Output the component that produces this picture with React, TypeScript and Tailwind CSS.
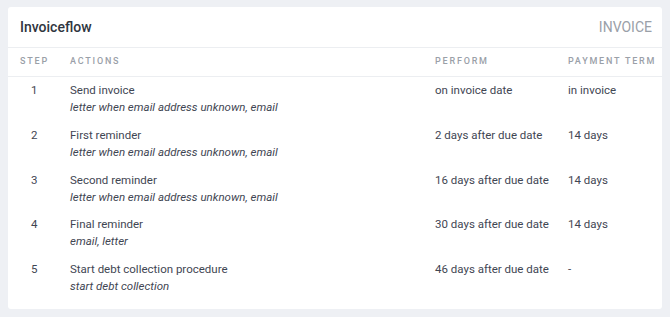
const steps = [
  { step: 1, action: 'Send invoice', channel: 'letter when email address unknown, email', perform: 'on invoice date', term: 'in invoice' },
  { step: 2, action: 'First reminder', channel: 'letter when email address unknown, email', perform: '2 days after due date', term: '14 days' },
  { step: 3, action: 'Second reminder', channel: 'letter when email address unknown, email', perform: '16 days after due date', term: '14 days' },
  { step: 4, action: 'Final reminder', channel: 'email, letter', perform: '30 days after due date', term: '14 days' },
  { step: 5, action: 'Start debt collection procedure', channel: 'start debt collection', perform: '46 days after due date', term: '-' },
];

const cols = 'grid grid-cols-[50px_365px_133px_1fr]';

export default function App() {
  return (
    <div className="min-h-[317px] bg-[#eef0f4] px-[8px] pt-[7px] pb-[7px] font-['Roboto',sans-serif] text-[#3f4653]">
      <div className="bg-white rounded-[3px] pb-[8px]">
        {/* Header */}
        <div className="flex items-center justify-between h-[41px] pl-[12px] pr-[10px] border-b border-[#eceef1]">
          <h1 className="text-[14px] font-medium text-[#2f3540]">Invoiceflow</h1>
          <span className="text-[14px] text-[#9aa0a8]">INVOICE</span>
        </div>

        {/* Column headers */}
        <div className={`${cols} h-[29px] items-center px-[12px] border-b border-[#eceef1] text-[9px] font-medium tracking-[1.8px] text-[#9aa0a8] whitespace-nowrap`}>
          <span>STEP</span>
          <span>ACTIONS</span>
          <span>PERFORM</span>
          <span>PAYMENT TERM</span>
        </div>

        {/* Rows */}
        {steps.map(s => (
          <div key={s.step} className={`${cols} px-[12px] pt-[5px] pb-[5.75px] text-[11.5px] leading-[17px]`}>
            <span className="pl-[11px]">{s.step}</span>
            <div>
              <p>{s.action}</p>
              <p className="italic">{s.channel}</p>
            </div>
            <span>{s.perform}</span>
            <span>{s.term}</span>
          </div>
        ))}
      </div>
    </div>
  );
}
